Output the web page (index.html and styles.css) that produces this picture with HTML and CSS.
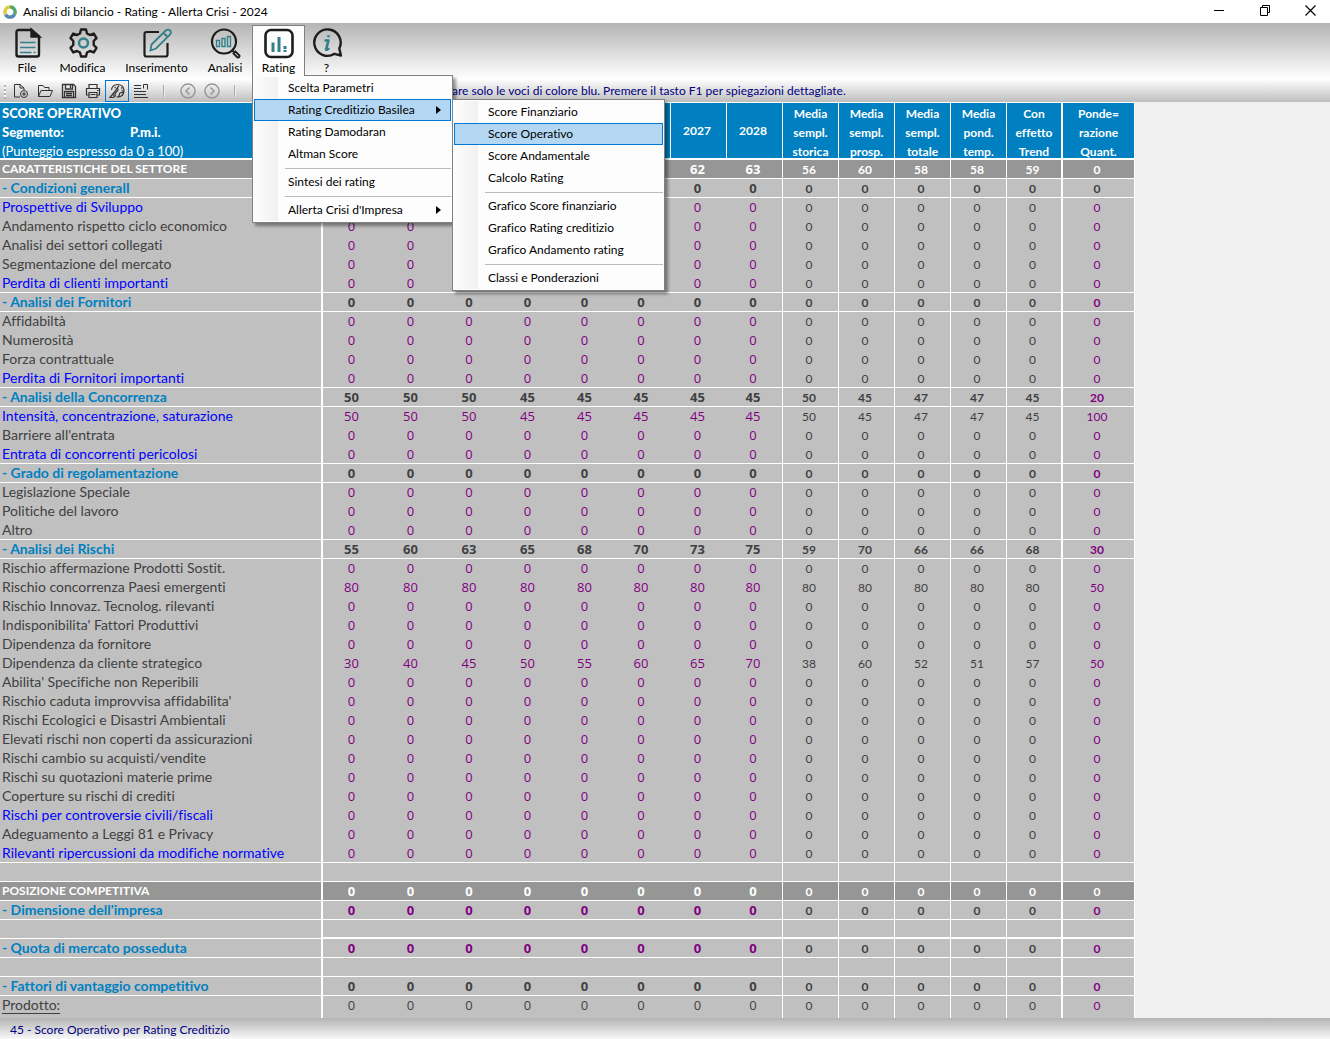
FILE: index.html
```html
<!DOCTYPE html>
<html lang="it">
<head>
<meta charset="utf-8">
<title>Analisi di bilancio - Rating - Allerta Crisi - 2024</title>
<link rel="stylesheet" href="styles.css">
</head>
<body>
<header class="titlebar">
  <svg class="logo" width="14" height="14" viewBox="0 0 14 14" fill="none" stroke-width="3.4"><path d="M7 1.9A5.1 5.1 0 0 0 2.6 9.6" stroke="#e3c83f"/><path d="M7 1.9A5.1 5.1 0 0 1 11.4 9.6" stroke="#57a66b"/><path d="M2.6 9.6A5.1 5.1 0 0 0 11.4 9.6" stroke="#5487b5"/></svg>
  <h1 class="title">Analisi di bilancio - Rating - Allerta Crisi - 2024</h1>
  <div class="window-buttons">
    <button type="button" aria-label="Riduci a icona"><svg width="11" height="11" viewBox="0 0 11 11"><path d="M1 5.5h10" stroke="#000"/></svg></button>
    <button type="button" aria-label="Ripristina"><svg width="11" height="11" viewBox="0 0 11 11" fill="none" stroke="#000"><path d="M1.500 2.500h7v8h-7zM3.500 2.500v-2h7v7h-2"/></svg></button>
    <button type="button" aria-label="Chiudi"><svg width="11" height="11" viewBox="0 0 11 11" stroke="#000" stroke-width="1.200"><path d="M.5.5l10 10M10.500.5l-10 10"/></svg></button>
  </div>
</header>

<div class="bars">
  <nav class="menubar">
    <button type="button" class="menu-button">
      <svg width="32" height="32" viewBox="0 0 32 32" fill="none" stroke="#1d1d1b" stroke-width="2.400"><path d="M7.500 3h13L28 9.500v18a2 2 0 0 1-2 2H7.500a2 2 0 0 1-2-2V5a2 2 0 0 1 2-2z"/><path d="M20.500 3v6.500H28z" fill="#1d1d1b"/><g stroke="#31808a" stroke-width="1.600"><path d="M9 15.500h15.500M9 20.500h15.500M9 25.500h11.500M22.500 25.500h2"/></g></svg>
      <span>File</span>
    </button>
    <button type="button" class="menu-button">
      <svg width="32" height="32" viewBox="0 0 32 32" fill="none" stroke="#1d1d1b" stroke-width="2.400" stroke-linejoin="round"><path d="M14 2.500h5l1 4 3 1.500 3.800-1.400 2.700 4.600-2.800 2.800v4l2.800 2.800-2.700 4.600-3.800-1.400-3 1.500-1 4h-5l-1-4-3-1.500-3.800 1.400-2.700-4.600L6.300 18v-4l-2.800-2.800 2.700-4.600L10 8l3-1.500z"/><circle cx="16.500" cy="16" r="4.500" stroke="#31808a"/></svg>
      <span>Modifica</span>
    </button>
    <button type="button" class="menu-button">
      <svg width="32" height="32" viewBox="0 0 32 32" fill="none" stroke="#1d1d1b" stroke-width="2.200"><path d="M18 5H5.500a2 2 0 0 0-2 2v20.500a2 2 0 0 0 2 2h19a2 2 0 0 0 2-2V16"/><path d="M9.500 23.500l1-6L25 3.300q2-1.500 4 0 1.800 2 .2 4L15 21.500zM22.500 6l4.200 4" stroke="#31808a" stroke-width="1.800"/></svg>
      <span>Inserimento</span>
    </button>
    <button type="button" class="menu-button">
      <svg width="32" height="32" viewBox="0 0 32 32" fill="none" stroke="#1d1d1b" stroke-width="2.200"><circle cx="15" cy="14.500" r="12"/><path d="M23 23l2 2"/><path d="M24.500 26.500l2-2 4 4q.5 2-2 2z" stroke-width="1.800"/><path d="M7.500 13.500h3v6h-3zM13 11.500h3v8h-3zM18.500 9.500h3v10h-3z" stroke="#31808a" stroke-width="1.400"/></svg>
      <span>Analisi</span>
    </button>
    <div class="menu-open">
      <button type="button" class="menu-button is-open" aria-expanded="true">
        <svg width="32" height="32" viewBox="0 0 32 32" fill="none" stroke="#1d1d1b" stroke-width="2.600"><rect x="2.500" y="3" width="27" height="27" rx="5.500"/><path d="M10 15.500v9.500M16 10v15M22 19v3M22 23v2" stroke="#31808a" stroke-width="3"/></svg>
        <span>Rating</span>
      </button>
      <ul class="menu">
        <li><button type="button">Scelta Parametri</button></li>
        <li class="has-submenu">
          <button type="button" class="is-selected">Rating Creditizio Basilea<i class="arrow"></i></button>
          <ul class="menu submenu">
            <li><button type="button">Score Finanziario</button></li>
            <li><button type="button" class="is-selected">Score Operativo</button></li>
            <li><button type="button">Score Andamentale</button></li>
            <li><button type="button">Calcolo Rating</button></li>
            <li class="separator"></li>
            <li><button type="button">Grafico Score finanziario</button></li>
            <li><button type="button">Grafico Rating creditizio</button></li>
            <li><button type="button">Grafico Andamento rating</button></li>
            <li class="separator"></li>
            <li><button type="button">Classi e Ponderazioni</button></li>
          </ul>
        </li>
        <li><button type="button">Rating Damodaran</button></li>
        <li><button type="button">Altman Score</button></li>
        <li class="separator"></li>
        <li><button type="button">Sintesi dei rating</button></li>
        <li class="separator"></li>
        <li><button type="button">Allerta Crisi d'Impresa<i class="arrow"></i></button></li>
      </ul>
    </div>
    <button type="button" class="menu-button">
      <svg width="32" height="32" viewBox="0 0 32 32" fill="none" stroke="#1d1d1b" stroke-width="2.400" stroke-linejoin="round"><path d="M23.500 26.800A13.200 13.200 0 1 1 28.300 21.500l1.600 7z"/><path d="M13.500 13.500h4l-2.500 9q1 1 3-1.500M17.500 8.200v2" stroke="#31808a" stroke-width="2.600"/></svg>
      <span>?</span>
    </button>
  </nav>

  <div class="toolbar">
    <span class="grip"></span>
    <button type="button" aria-label="Nuovo"><svg width="16" height="16" viewBox="0 0 16 16"><path d="M7 14H1.500V1.500H7L11 5v2M7 1.500V5h4"/><circle cx="11" cy="11" r="3.500"/><path d="M9 11h4M11 9v4"/></svg></button>
    <button type="button" aria-label="Apri"><svg width="16" height="16" viewBox="0 0 16 16"><path d="M1.500 13.500V2.500H6l1.500 2H12v3M1.500 13.500l2.500-6h11.500l-2.500 6z"/></svg></button>
    <button type="button" aria-label="Salva"><svg width="16" height="16" viewBox="0 0 16 16"><path d="M1.500 1.500h11l2 2v11h-13zM4.500 1.500V6h7V1.500M9.500 2v3M3.500 14.500v-6h9v6M5 10.500h6M5 12.500h6" stroke-width="1.300"/></svg></button>
    <button type="button" aria-label="Stampa"><svg width="16" height="16" viewBox="0 0 16 16"><path d="M4 5V1.500h8V5M4 12H1.500V5.500h13V12H12M4 9.500h8v5H4zM5.500 11.500h5M12 7.500h1.500" stroke-width="1.200"/></svg></button>
    <button type="button" class="is-active" aria-label="Colori"><svg width="16" height="16" viewBox="0 0 16 16"><path d="M2.500 7Q3 1.500 9 1.500q6 .5 6 6.500-.5 5.500-6 6H7.500M15 8q-1 2-3 1.500-1.500 0-1.500 1.500t-1.500 3M1 14.500L5.500 9l3-4.500L9 7 6 10.500q1 3-2 4zM3.500 11l1.500 1.500" stroke-width="1.200"/><path d="M5.500 4.500h1.200M9 3.500h1.200M12 5h1.200M12.500 7.500h1.200" stroke-width="1.400"/></svg></button>
    <button type="button" aria-label="Elenco"><svg width="16" height="16" viewBox="0 0 16 16"><path d="M1 2.500h7M1 5.500h7M1 8.500h12M1 11.500h12M1 14.500h14M10.500 1.500h4v5M10.500 1.500v4"/></svg></button>
    <span class="divider"></span>
    <button type="button" class="is-muted" aria-label="Indietro"><svg width="16" height="16" viewBox="0 0 16 16"><circle cx="8" cy="8" r="7"/><path d="M9.500 4.500L6 8l3.500 3.500"/></svg></button>
    <button type="button" class="is-muted" aria-label="Avanti"><svg width="16" height="16" viewBox="0 0 16 16"><circle cx="8" cy="8" r="7"/><path d="M6.500 4.500L10 8l-3.500 3.500"/></svg></button>
    <span class="divider"></span>
    <p class="hint">are solo le voci di colore blu. Premere il tasto F1 per spiegazioni dettagliate.</p>
  </div>
</div>

<main class="sheet">
  <table class="scores">
    <colgroup>
      <col class="w-label"><col class="w-60"><col class="w-58"><col class="w-59"><col class="w-58"><col class="w-56"><col class="w-57"><col class="w-56"><col class="w-56">
      <col class="w-56"><col class="w-56"><col class="w-56"><col class="w-56"><col class="w-56"><col class="w-72">
    </colgroup>
    <thead>
      <tr>
        <th class="heading"><div class="lines"><b class="sheet-name">SCORE OPERATIVO</b><div class="segment"><b>Segmento:</b><b>P.m.i.</b></div><span class="note">(Punteggio espresso da 0 a 100)</span></div></th>
        <th></th><th></th><th></th><th></th><th></th><th></th><th>2027</th><th>2028</th>
        <th class="summary"><div class="lines">Media<br>sempl.<br>storica</div></th>
        <th class="summary"><div class="lines">Media<br>sempl.<br>prosp.</div></th>
        <th class="summary"><div class="lines">Media<br>sempl.<br>totale</div></th>
        <th class="summary"><div class="lines">Media<br>pond.<br>temp.</div></th>
        <th class="summary before-weight"><div class="lines">Con<br>effetto<br>Trend</div></th>
        <th class="summary"><div class="lines">Ponde=<br>razione<br>Quant.</div></th>
      </tr>
    </thead>
    <tbody id="rows"></tbody>
  </table>
</main>

<footer class="statusbar">45 - Score Operativo per Rating Creditizio</footer>
<script src="script.js"></script>
</body>
</html>
```
FILE: styles.css
```css
* { box-sizing: border-box; }

body {
  margin: 0;
  min-height: 100vh;
  display: flex;
  flex-direction: column;
  background: #f0f0f0;
  color: #000;
  font: 12px/16px Lato, "Open Sans", sans-serif;
  font-variant-ligatures: none;
}

button {
  margin: 0;
  padding: 0;
  border: 0;
  background: none;
  color: inherit;
  font: inherit;
  font-variant-ligatures: none;
}

svg { display: block; }

/* Title bar */
.titlebar {
  display: flex;
  align-items: center;
  height: 23px;
  padding: 0 14px 0 3px;
  background: #fff;
}
.title { margin: 0 0 0 6px; font-size: 12px; font-weight: 400; }
.window-buttons { display: flex; gap: 35px; margin-left: auto; padding-bottom: 2px; }

/* Menu bar and toolbar share one gradient */
.bars { background: linear-gradient(#b4b4b4, #fff 56px, #bebebe); }

.menubar {
  display: grid;
  grid-template-columns: 46px 65px 83px 54px 53px 43px;
  height: 53px;
  padding: 2px 0 0 4px;
}
.menu-button {
  display: flex;
  flex-direction: column;
  align-items: center;
  gap: 1px;
  width: 100%;
  height: 51px;
  padding-top: 2px;
}
.menu-open { position: relative; }
.menu-button.is-open {
  position: relative;
  z-index: 3;
  padding-top: 1px;
  border: 1px solid #808080;
  border-bottom: 0;
  background: #fdfdfd;
}

.menu {
  position: absolute;
  z-index: 2;
  top: 50px;
  left: 0;
  width: 201px;
  margin: 0;
  padding: 1px;
  list-style: none;
  border: 1px solid #808080;
  background: linear-gradient(90deg, #fdfdfd, #f0f0f0) 1px 1px / 24px calc(100% - 2px) no-repeat #fdfdfd;
  box-shadow: 3px 3px 3px rgba(0, 0, 0, .4);
}
.menu button {
  display: flex;
  align-items: center;
  justify-content: space-between;
  width: 100%;
  height: 22px;
  padding: 0 9px 0 33px;
  border: 1px solid transparent;
  text-align: left;
}
.menu button.is-selected { border-color: #0078d7; background: #b3d7f3; }
.has-submenu { position: relative; }
.submenu { top: 0; left: 198px; width: 213px; }
.separator { height: 6px; margin-left: 31px; padding-top: 3px; }
.separator::before { content: ""; display: block; height: 1px; background: #bdbdbd; }
.arrow {
  border: 4px solid transparent;
  border-left: 5px solid #000;
  border-right: 0;
}

.toolbar { display: flex; align-items: center; height: 26px; padding: 3px 4px 0; }
.toolbar button {
  display: grid;
  place-items: center;
  width: 24px;
  height: 22px;
  border: 1px solid transparent;
}
.toolbar svg { fill: none; stroke: #333; }
.toolbar .is-active { border-color: #0078d7; }
.toolbar .is-muted svg { stroke: #999; stroke-width: 1.5px; }
.grip {
  width: 2px;
  height: 16px;
  margin-right: 3px;
  background: repeating-linear-gradient(#fff 0 2px, #b0b0b0 2px 4px);
}
.divider { width: 2px; height: 12px; margin: 0 11px 0 10px; background: #aaa; border-right: 1px solid #eee; }
.hint { margin: 0 0 0 205px; color: #000080; }

/* Score table */
.sheet { flex: 1; }
.scores {
  width: 1135px;
  table-layout: fixed;
  border-collapse: separate;
  border-spacing: 0;
  border-top: 1px solid #fff;
  background: #c0c0c0;
  color: #404040;
}
.w-label { width: 323px; }
.w-56 { width: 56px; }
.w-57 { width: 57px; }
.w-58 { width: 58px; }
.w-59 { width: 59px; }
.w-60 { width: 60px; }
.w-72 { width: 72px; }

.scores th, .scores td {
  height: 19px;
  padding: 0 3px 0 0;
  line-height: 17px;
  text-align: center;
  white-space: nowrap;
}
.scores thead th {
  height: 57px;
  border-right: 1px solid #fff;
  border-bottom: 2px solid #fff;
  background: #0080c0;
  color: #fff;
  font-size: 12px;
}
.scores thead .summary { padding-right: 0; }
.scores thead .before-weight { border-right-width: 2px; }
.lines { height: 55px; padding-top: 1px; line-height: 19px; }
.scores thead .heading { padding-left: 2px; border-right-width: 2px; font-size: 13px; text-align: left; }
.sheet-name { display: block; }
.segment { display: grid; grid-template-columns: 128px 1fr; }
.note { font-weight: 400; }

.scores tbody th {
  padding: 0 0 2px 2px;
  border-right: 2px solid #fff;
  font-size: 14px;
  font-weight: 400;
  line-height: 15px;
  text-align: left;
}
.year { font: 13px "Open Sans", sans-serif; color: #800080; }
.average { border-right: 1px solid #fff; }
.before-averages { border-right: 1px solid #fff; }
.before-weight { border-right: 2px solid #fff; }
.weight { border-right: 1px solid #fff; color: #800080; }

.ruled th, .ruled td { border-bottom: 1px solid #fff; }
.double td { border-bottom-width: 2px; }
.input th { color: #0000ff; }
.underlined th { text-decoration: underline; text-underline-offset: 3px; }
.underlined .year { color: #404040; }
.group th { color: #0080c0; }
.section { background: #969696; color: #fff; }
.scores .section th { font-size: 12px; }
.scores .group th, .group td, .scores .section th, .section td { font-weight: 700; }
.group .year, .neutral .weight { color: #404040; }
.group.editable .year { color: #800080; }
.section .year, .section .weight { color: #fff; }
.scores tbody tr:last-child td { height: 22px; padding-bottom: 3px; }
.scores tbody tr:last-child th { height: 22px; padding-bottom: 5px; }

/* Status bar */
.statusbar {
  height: 21px;
  padding: 4px 10px 0;
  background: linear-gradient(#b4b4b4, #f8f8f8);
  color: #000080;
}
```
FILE: script.js
```js
// Each row: [classes, label, values, first filled column].
// Values: 8 years, 5 averages, weight. A single number fills every column.
const rows = [
  ["section ruled", "CARATTERISTICHE DEL SETTORE", ["", "", "", "", "", "", 62, 63, 56, 60, 58, 58, 59, 0]],
  ["group neutral ruled", "- Condizioni generalI", ["", "", "", "", "", "", 0, 0, 0, 0, 0, 0, 0, 0]],
  ["input", "Prospettive di Sviluppo", ["", "", "", "", "", "", 0, 0, 0, 0, 0, 0, 0, 0]],
  ["", "Andamento rispetto ciclo economico", [0, 0, "", "", "", "", 0, 0, 0, 0, 0, 0, 0, 0]],
  ["", "Analisi dei settori collegati", [0, 0, "", "", "", "", 0, 0, 0, 0, 0, 0, 0, 0]],
  ["", "Segmentazione del mercato", [0, 0, "", "", "", "", 0, 0, 0, 0, 0, 0, 0, 0]],
  ["input ruled", "Perdita di clienti importanti", [0, 0, "", "", "", "", 0, 0, 0, 0, 0, 0, 0, 0]],
  ["group ruled", "- Analisi dei Fornitori", 0],
  ["", "Affidabiltà", 0],
  ["", "Numerosità", 0],
  ["", "Forza contrattuale", 0],
  ["input ruled", "Perdita di Fornitori importanti", 0],
  ["group ruled", "- Analisi della Concorrenza", [50, 50, 50, 45, 45, 45, 45, 45, 50, 45, 47, 47, 45, 20]],
  ["input", "Intensità, concentrazione, saturazione", [50, 50, 50, 45, 45, 45, 45, 45, 50, 45, 47, 47, 45, 100]],
  ["", "Barriere all'entrata", 0],
  ["input ruled", "Entrata di concorrenti pericolosi", 0],
  ["group ruled", "- Grado di regolamentazione", 0],
  ["", "Legislazione Speciale", 0],
  ["", "Politiche del lavoro", 0],
  ["ruled", "Altro", 0],
  ["group ruled", "- Analisi dei Rischi", [55, 60, 63, 65, 68, 70, 73, 75, 59, 70, 66, 66, 68, 30]],
  ["", "Rischio affermazione Prodotti Sostit.", 0],
  ["", "Rischio concorrenza Paesi emergenti", [80, 80, 80, 80, 80, 80, 80, 80, 80, 80, 80, 80, 80, 50]],
  ["", "Rischio Innovaz. Tecnolog. rilevanti", 0],
  ["", "Indisponibilita' Fattori Produttivi", 0],
  ["", "Dipendenza da fornitore", 0],
  ["", "Dipendenza da cliente strategico", [30, 40, 45, 50, 55, 60, 65, 70, 38, 60, 52, 51, 57, 50]],
  ["", "Abilita' Specifiche non Reperibili", 0],
  ["", "Rischio caduta improvvisa affidabilita'", 0],
  ["", "Rischi Ecologici e Disastri Ambientali", 0],
  ["", "Elevati rischi non coperti da assicurazioni", 0],
  ["", "Rischi cambio su acquisti/vendite", 0],
  ["", "Rischi su quotazioni materie prime", 0],
  ["", "Coperture su rischi di crediti", 0],
  ["input", "Rischi per controversie civili/fiscali", 0],
  ["", "Adeguamento a Leggi 81 e Privacy", 0],
  ["input ruled", "Rilevanti ripercussioni da modifiche normative", 0],
  ["ruled", "", ""],
  ["section ruled", "POSIZIONE COMPETITIVA", 0],
  ["group editable ruled", "- Dimensione dell'impresa", 0],
  ["ruled double", "", ""],
  ["group editable ruled", "- Quota di mercato posseduta", 0],
  ["ruled", "", ""],
  ["group ruled", "- Fattori di vantaggio competitivo", 0],
  ["underlined", "Prodotto:", 0]
];

function columnClass(index) {
  if (index === 7) return "year before-averages";
  if (index < 7) return "year";
  if (index === 12) return "before-weight";
  if (index === 13) return "weight";
  return "average";
}

const body = document.getElementById("rows");
for (const [classes, label, values] of rows) {
  const tr = body.insertRow();
  tr.className = classes;
  const th = document.createElement("th");
  th.scope = "row";
  th.textContent = label;
  tr.append(th);
  for (let i = 0; i < 14; i++) {
    const td = tr.insertCell();
    td.className = columnClass(i);
    td.textContent = Array.isArray(values) ? values[i] : values;
  }
}
```
